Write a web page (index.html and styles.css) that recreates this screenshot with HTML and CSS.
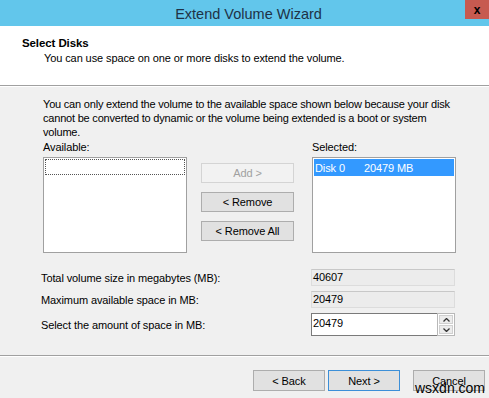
FILE: index.html
```html
<!DOCTYPE html>
<html>
<head>
<meta charset="utf-8">
<link rel="stylesheet" href="styles.css">
</head>
<body>
<div class="window">
  <div class="titlebar">
    <span class="title">Extend Volume Wizard</span>
    <span class="close">x</span>
  </div>
  <div class="header">
    <div class="h-title">Select Disks</div>
    <div class="h-sub">You can use space on one or more disks to extend the volume.</div>
  </div>
  <div class="content">
    <p class="info">You can only extend the volume to the available space shown below because your disk<br>cannot be converted to dynamic or the volume being extended is a boot or system<br>volume.</p>
    <div class="lists">
      <div class="col">
        <div class="label">Available:</div>
        <div class="listbox"><div class="focus"></div></div>
      </div>
      <div class="buttons">
        <button class="btn disabled">Add &gt;</button>
        <button class="btn">&lt; Remove</button>
        <button class="btn">&lt; Remove All</button>
      </div>
      <div class="col">
        <div class="label">Selected:</div>
        <div class="listbox"><div class="item selected"><span class="disk">Disk 0</span><span>20479 MB</span></div></div>
      </div>
    </div>
    <div class="fields">
      <div class="flabel">Total volume size in megabytes (MB):</div>
      <div class="field ro">40607</div>
      <div class="flabel">Maximum available space in MB:</div>
      <div class="field ro">20479</div>
      <div class="flabel">Select the amount of space in MB:</div>
      <div class="spinner">
        <div class="field edit">20479</div>
        <div class="spin">
          <div class="arrow">
            <svg width="7" height="4" viewBox="0 0 7 4"><path d="M0.5 3.5 L3.5 0.5 L6.5 3.5" fill="none" stroke="#333" stroke-width="1.3"/></svg>
          </div>
          <div class="arrow">
            <svg width="7" height="4" viewBox="0 0 7 4"><path d="M0.5 0.5 L3.5 3.5 L6.5 0.5" fill="none" stroke="#333" stroke-width="1.3"/></svg>
          </div>
        </div>
      </div>
    </div>
  </div>
  <div class="footer">
    <button class="btn fbtn">&lt; Back</button>
    <button class="btn fbtn default">Next &gt;</button>
    <button class="btn fbtn">Cancel</button>
  </div>
  <div class="watermark">wsxdn.com</div>
</div>
</body>
</html>
```

FILE: styles.css
```css
* { box-sizing: border-box; }
html, body { margin: 0; padding: 0; }
body {
  width: 489px;
  height: 398px;
  overflow: hidden;
  font-family: "Liberation Sans", Arial, sans-serif;
  font-size: 11px;
  letter-spacing: -0.1px;
  color: #000;
  background: #f0f0f0;
}
.window {
  position: relative;
  width: 489px;
  height: 398px;
  display: flex;
  flex-direction: column;
  background: #f0f0f0;
  overflow: hidden;
}
.window > * { flex-shrink: 0; }
.titlebar {
  height: 26px;
  background: #62c6eb;
  display: flex;
  justify-content: center;
  align-items: center;
  position: relative;
}
.title {
  font-size: 14.5px;
  letter-spacing: 0;
  color: #1e3246;
  margin-left: 8px;
  margin-top: 1px;
}
.close {
  position: absolute;
  right: 0;
  top: 0;
  width: 24px;
  height: 19px;
  background: #c75a50;
  color: #000;
  font-weight: bold;
  font-size: 12px;
  display: flex;
  align-items: center;
  justify-content: center;
}
.header {
  height: 60px;
  background: #fff;
  padding: 10px 0 0 22px;
  border-bottom: 1px solid #a0a0a0;
}
.h-title {
  font-weight: bold;
  font-size: 11.5px;
  line-height: 14px;
}
.h-sub {
  padding-left: 22px;
  line-height: 16px;
}
.content {
  height: 270px;
  padding: 10px 0 0 43px;
  border-top: 1px solid #fff;
  border-bottom: 1px solid #a0a0a0;
}
.info {
  margin: 0;
  line-height: 14px;
  letter-spacing: -0.2px;
}
.lists {
  display: flex;
  align-items: flex-start;
}
.col {
  display: flex;
  flex-direction: column;
  width: 144px;
}
.label {
  line-height: 14px;
  height: 18px;
  padding-top: 1px;
}
.listbox {
  height: 96px;
  background: #fff;
  border: 1px solid #a0a0a0;
  padding: 1px;
}
.focus {
  height: 16px;
  border: 1px dotted #555;
}
.item {
  height: 17px;
  display: flex;
  align-items: center;
  padding-left: 1px;
}
.item.selected {
  background: #3399ff;
  color: #fff;
}
.disk { width: 49px; }
.buttons {
  display: flex;
  flex-direction: column;
  gap: 9px;
  margin: 24px 18px 0 14px;
}
.btn {
  font-family: inherit;
  font-size: 11px;
  letter-spacing: -0.1px;
  width: 93px;
  height: 20px;
  padding: 0;
  background: #e1e1e1;
  border: 1px solid #adadad;
  color: #000;
}
.btn.disabled {
  background: #f2f2f2;
  border-color: #d4d4d4;
  color: #a0a0a0;
}
.fields {
  display: grid;
  grid-template-columns: 268px 144px;
  grid-template-rows: 17px 17px 23px;
  row-gap: 5px;
  margin-top: 16px;
  align-items: center;
}
.flabel {
  margin-left: -2px;
  line-height: 14px;
}
.field {
  height: 17px;
  line-height: 15px;
  padding-left: 1px;
}
.ro {
  background: #ececec;
  border: 1px solid #dcdcdc;
  border-top-color: #c8c8c8;
}
.spinner {
  display: flex;
  height: 23px;
}
.edit {
  flex: 1;
  height: 23px;
  line-height: 19px;
  background: #fff;
  border: 1px solid #7a7a7a;
  border-right: none;
}
.spin {
  width: 18px;
  display: flex;
  flex-direction: column;
  border: 1px solid #b8b8b8;
  background: #fff;
  padding: 1px;
  gap: 1px;
}
.arrow {
  flex: 1;
  background: #ececec;
  border: 1px solid #d0d0d0;
  display: flex;
  align-items: center;
  justify-content: center;
}
.footer {
  height: 42px;
  border-top: 1px solid #fff;
  display: flex;
  justify-content: flex-end;
  align-items: flex-start;
  gap: 3px;
  padding: 13px 4px 0 0;
}
.fbtn {
  width: 72px;
  height: 21px;
}
.fbtn:last-child { margin-left: 10px; }
.default {
  border-color: #3c8fd8;
}
.watermark {
  position: absolute;
  left: 415px;
  top: 380px;
  font-family: "Liberation Sans", Arial, sans-serif;
  font-size: 14px;
  line-height: 16px;
  color: #000;
  letter-spacing: 0;
}
```
